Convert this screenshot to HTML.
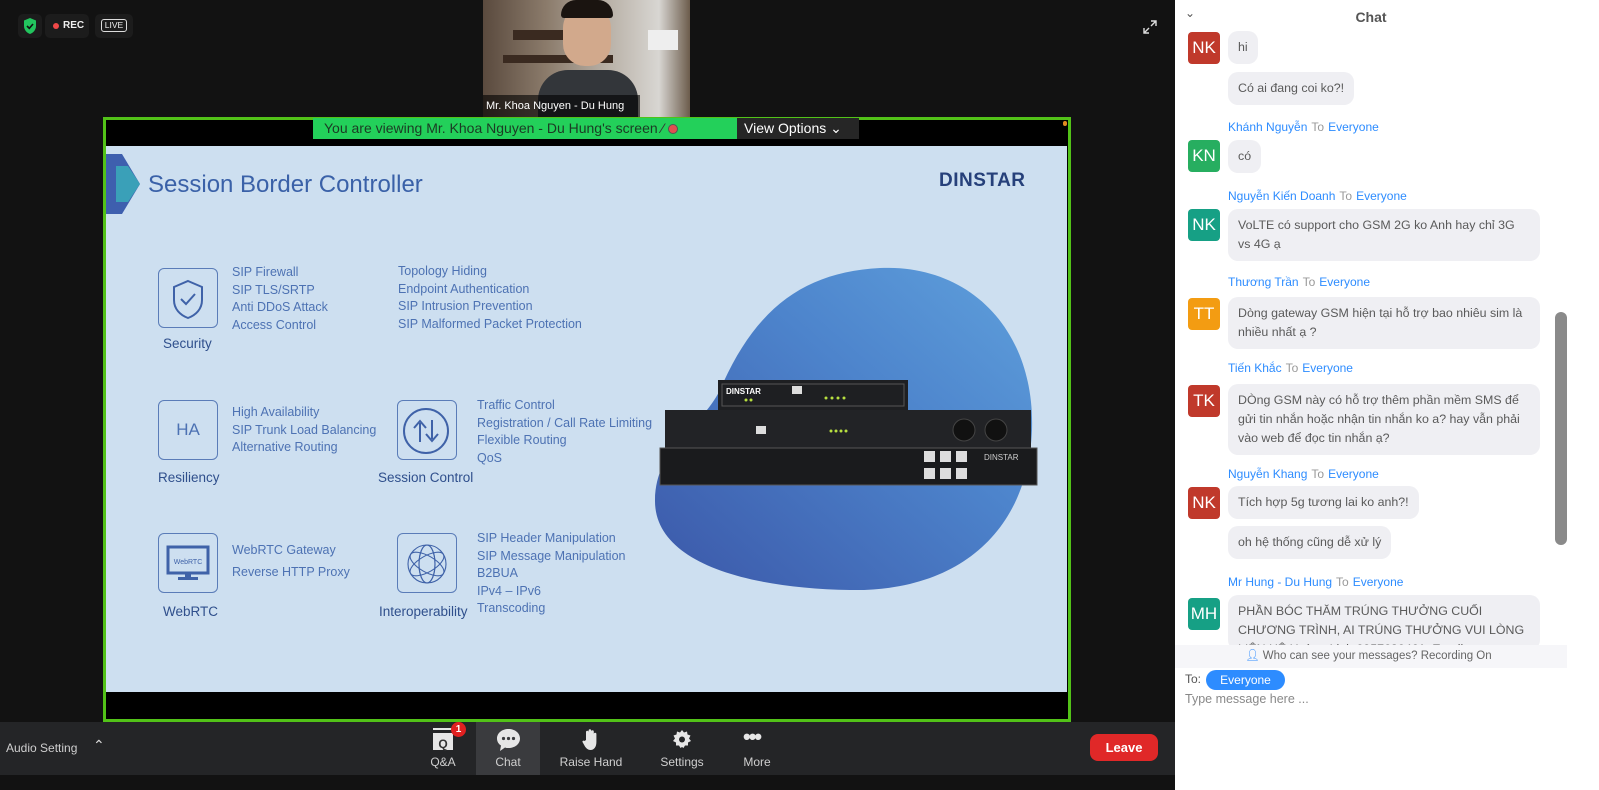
<!DOCTYPE html>
<html><head><meta charset="utf-8"><style>
*{margin:0;padding:0;box-sizing:border-box}
body{width:1599px;height:790px;background:#121212;position:relative;overflow:hidden;font-family:"Liberation Sans","Noto Sans CJK SC",sans-serif}
.a{position:absolute}
.st{position:absolute;color:#4d72b3;font-size:12.5px;line-height:17.6px;white-space:nowrap}
.lb{position:absolute;color:#2f4f8c;font-size:13.5px;white-space:nowrap}
.ib{position:absolute;width:60px;height:60px;border:1.3px solid #5a7cb8;border-radius:6px}
.av{position:absolute;left:1188px;width:32px;height:32px;border-radius:4px;color:#fff;font-size:17px;text-align:center;line-height:32px}
.bu{position:absolute;left:1228px;background:#efeff3;border-radius:10px;color:#5a5a5a;font-size:12.4px;line-height:19px;padding:7px 10px}
.hd{position:absolute;left:1228px;font-size:12px;color:#2d8cff;white-space:nowrap}
.hd span{color:#999;margin:0 4px}
.tb{position:absolute;top:722px;height:53px;color:#cfcfcf;font-size:12px;text-align:center}
</style></head><body>

<div class="a" style="left:18px;top:14px;width:24px;height:24px;background:#1c1c1c;border-radius:5px"></div>
<svg class="a" style="left:22px;top:17px" width="16" height="18" viewBox="0 0 16 18"><path d="M8 1 L14 3.5 V9 C14 13 11 16 8 17 C5 16 2 13 2 9 V3.5Z" fill="#22c55e"/><path d="M5 9 L7.3 11.3 L11 7" stroke="#111" stroke-width="1.6" fill="none"/></svg>
<div class="a" style="left:45px;top:14px;width:44px;height:24px;background:#1c1c1c;border-radius:5px"></div>
<div class="a" style="left:53px;top:23px;width:6px;height:6px;border-radius:3px;background:#f04848"></div>
<div class="a" style="left:63px;top:20px;color:#eee;font-size:10px;font-weight:bold">REC</div>
<div class="a" style="left:95px;top:14px;width:38px;height:24px;background:#1c1c1c;border-radius:5px"></div>
<div class="a" style="left:101px;top:19px;width:26px;height:13px;border:1px solid #ddd;border-radius:3px;color:#eee;font-size:8.5px;text-align:center;line-height:11px">LIVE</div>
<svg class="a" style="left:1143px;top:20px" width="14" height="14" viewBox="0 0 14 14" stroke="#ddd" stroke-width="1.4" fill="none"><path d="M8 1h5v5M13 1L8 6M6 13H1V8M1 13l5-5"/></svg>

<div class="a" style="left:483px;top:0;width:207px;height:117px;background:linear-gradient(90deg,#5a4a3e 0%,#8a7a6a 30%,#b8b0a6 60%,#d8d6d2 85%,#6c5c4c 100%);overflow:hidden">
 <div class="a" style="left:30px;top:30px;width:90px;height:10px;background:#3a2a20"></div>
 <div class="a" style="left:20px;top:55px;width:110px;height:8px;background:#3a2a20"></div>
 <div class="a" style="left:165px;top:30px;width:30px;height:20px;background:#eee"></div>
 <div class="a" style="left:80px;top:4px;width:48px;height:62px;border-radius:24px 24px 22px 22px;background:#d2a98c"></div>
 <div class="a" style="left:78px;top:0px;width:52px;height:18px;border-radius:20px 20px 4px 4px;background:#1a1410"></div>
 <div class="a" style="left:55px;top:70px;width:100px;height:60px;border-radius:30px 30px 0 0;background:#33363a"></div>
 <div class="a" style="left:0;top:95px;width:157px;height:22px;background:rgba(0,0,0,.6);color:#fff;font-size:11px;line-height:22px;padding-left:3px">Mr. Khoa Nguyen - Du Hung</div>
</div>

<div class="a" style="left:103px;top:117px;width:968px;height:605px;border:3px solid #52c218;background:#000"></div>
<div class="a" style="left:1063px;top:121px;width:4px;height:5px;background:#e08a20;border-radius:2px"></div>
<div class="a" style="left:313px;top:118px;width:424px;height:21px;background:#23d05a;color:#1c3a24;font-size:14px;line-height:21px;padding-left:11px;white-space:nowrap">You are viewing Mr. Khoa Nguyen - Du Hung's screen <span style="color:#333">&#x2044;</span> <span style="display:inline-block;width:10px;height:10px;border-radius:5px;border:1px solid #555;background:#e05050;vertical-align:-1px"></span></div>
<div class="a" style="left:737px;top:118px;width:122px;height:21px;background:#262626;color:#fff;font-size:14px;line-height:21px;padding-left:7px">View Options &#x2304;</div>

<div class="a" style="left:106px;top:146px;width:961px;height:546px;background:#cddff0;overflow:hidden">
 <svg class="a" style="left:0;top:0" width="961" height="546">
  <polygon points="0,8 16,8 34,38 16,68 0,68" fill="#3e5fae"/>
  <polygon points="10,20 22,20 34,38 22,56 10,56" fill="#3aa0b8"/>
  <defs><linearGradient id="g" x1="0" y1="1" x2="1" y2="0"><stop offset="0" stop-color="#3b57a8"/><stop offset=".6" stop-color="#4d84cc"/><stop offset="1" stop-color="#5fa0dc"/></linearGradient></defs>
  <path d="M774 122 C864 118 929 184 926 284 C922 384 854 446 744 444 C634 442 548 414 549 354 C550 300 594 284 614 244 C650 160 700 126 774 122Z" fill="url(#g)"/>
  <rect x="612" y="234" width="190" height="30" fill="#1e1f22"/>
  <rect x="616" y="238" width="182" height="22" fill="none" stroke="#555" stroke-width="1"/>
  <text x="620" y="248" fill="#fff" font-size="8" font-weight="bold" font-family="Liberation Sans">DINSTAR</text>
  <rect x="559" y="264" width="366" height="40" fill="#222326"/>
  <circle cx="890" cy="284" r="11" fill="#111" stroke="#444"/><circle cx="858" cy="284" r="11" fill="#111" stroke="#444"/>
  <rect x="650" y="280" width="10" height="8" fill="#ddd"/><rect x="686" y="240" width="10" height="8" fill="#ddd"/>
  <rect x="554" y="302" width="377" height="37" fill="#1a1b1d" stroke="#555"/>
  <rect x="818" y="305" width="11" height="11" fill="#ddd"/><rect x="834" y="305" width="11" height="11" fill="#ddd"/><rect x="850" y="305" width="11" height="11" fill="#ddd"/>
  <rect x="818" y="322" width="11" height="11" fill="#ddd"/><rect x="834" y="322" width="11" height="11" fill="#ddd"/><rect x="850" y="322" width="11" height="11" fill="#ddd"/>
  <text x="878" y="314" fill="#ccc" font-size="8" font-family="Liberation Sans">DINSTAR</text>
  <g fill="#b8e040"><circle cx="725" cy="285" r="1.5"/><circle cx="730" cy="285" r="1.5"/><circle cx="735" cy="285" r="1.5"/><circle cx="740" cy="285" r="1.5"/><circle cx="640" cy="254" r="1.5"/><circle cx="645" cy="254" r="1.5"/><circle cx="720" cy="252" r="1.5"/><circle cx="726" cy="252" r="1.5"/><circle cx="732" cy="252" r="1.5"/><circle cx="738" cy="252" r="1.5"/></g>
 </svg>
 <div class="a" style="left:42px;top:25px;color:#3a61a8;font-size:24px">Session Border Controller</div>
 <div class="a" style="left:833px;top:24px;color:#26407a;font-size:19px;font-weight:bold;letter-spacing:.5px">DINSTAR</div>
</div>

<div class="ib" style="left:158px;top:268px"></div>
<svg class="a" style="left:170px;top:278px" width="36" height="42" viewBox="0 0 36 42" fill="none" stroke="#3f62a8" stroke-width="2"><path d="M18 3 L32 9 V22 C32 31 26 37 18 40 C10 37 4 31 4 22 V9Z"/><path d="M11 21 L16 26 L25 16"/></svg>
<div class="st" style="left:232px;top:264px">SIP Firewall<br>SIP TLS/SRTP<br>Anti DDoS Attack<br>Access Control</div>
<div class="st" style="left:398px;top:263px">Topology Hiding<br>Endpoint Authentication<br>SIP Intrusion Prevention<br>SIP Malformed Packet Protection</div>
<div class="lb" style="left:163px;top:336px">Security</div>

<div class="ib" style="left:158px;top:400px"></div>
<div class="a" style="left:158px;top:420px;width:60px;text-align:center;color:#4d72b3;font-size:17px">HA</div>
<div class="st" style="left:232px;top:404px">High Availability<br>SIP Trunk Load Balancing<br>Alternative Routing</div>
<div class="lb" style="left:158px;top:470px">Resiliency</div>

<div class="ib" style="left:397px;top:400px"></div>
<svg class="a" style="left:401px;top:406px" width="50" height="50" viewBox="0 0 50 50" fill="none" stroke="#3f62a8" stroke-width="2"><circle cx="25" cy="25" r="22"/><path d="M19 36 V17 M13 22 L19 15 L25 22 M31 14 V33 M25 28 L31 35 L37 28"/></svg>
<div class="st" style="left:477px;top:397px">Traffic Control<br>Registration / Call Rate Limiting<br>Flexible Routing<br>QoS</div>
<div class="lb" style="left:378px;top:470px">Session Control</div>

<div class="ib" style="left:158px;top:533px"></div>
<svg class="a" style="left:166px;top:545px" width="44" height="38" viewBox="0 0 44 38"><rect x="2" y="2" width="40" height="26" fill="none" stroke="#3f62a8" stroke-width="3"/><rect x="19" y="28" width="6" height="4" fill="#3f62a8"/><rect x="12" y="32" width="20" height="3" fill="#3f62a8"/><text x="22" y="19" text-anchor="middle" fill="#3f62a8" font-size="7" font-family="Liberation Sans">WebRTC</text></svg>
<div class="st" style="left:232px;top:542px">WebRTC Gateway</div>
<div class="st" style="left:232px;top:564px">Reverse HTTP Proxy</div>
<div class="lb" style="left:163px;top:604px">WebRTC</div>

<div class="ib" style="left:397px;top:533px"></div>
<svg class="a" style="left:405px;top:542px" width="44" height="44" viewBox="0 0 44 44" fill="none" stroke="#3f62a8" stroke-width="1.1"><circle cx="22" cy="22" r="19"/><ellipse cx="22" cy="22" rx="19" ry="8" transform="rotate(30 22 22)"/><ellipse cx="22" cy="22" rx="19" ry="8" transform="rotate(-30 22 22)"/><ellipse cx="22" cy="22" rx="19" ry="8" transform="rotate(90 22 22)"/><ellipse cx="22" cy="22" rx="8" ry="19"/></svg>
<div class="st" style="left:477px;top:530px">SIP Header Manipulation<br>SIP Message Manipulation<br>B2BUA<br>IPv4 – IPv6<br>Transcoding</div>
<div class="lb" style="left:379px;top:604px">Interoperability</div>

<div class="a" style="left:0;top:722px;width:1175px;height:53px;background:#242527"></div>
<div class="a" style="left:0;top:775px;width:1175px;height:15px;background:#121212"></div>
<div class="a" style="left:6px;top:741px;color:#cfcfcf;font-size:12px">Audio Setting</div>
<div class="a" style="left:93px;top:737px;color:#ddd;font-size:14px">&#x2303;</div>
<div class="a" style="left:476px;top:722px;width:64px;height:53px;background:#3a3b3e"></div>
<div class="tb" style="left:420px;width:46px"><div style="margin:8px auto 0;width:20px;height:20px;background:#e6e6e6;color:#333;font-size:12px;line-height:22px;font-weight:bold;border-top:3px solid #242527;box-shadow:0 -2px 0 #e6e6e6">Q</div><div style="margin-top:5px">Q&amp;A</div></div>
<div class="a" style="left:451px;top:722px;width:15px;height:15px;border-radius:8px;background:#e02020;color:#fff;font-size:10px;font-weight:bold;text-align:center;line-height:15px">1</div>
<svg class="a" style="left:496px;top:728px" width="25" height="24" viewBox="0 0 25 24"><path d="M12.5 1 C19 1 24 5 24 10.5 C24 16 19 20 12.5 20 C11 20 10 20 9 19.5 L4 23 L5 17.5 C2.5 16 1 13.5 1 10.5 C1 5 6 1 12.5 1Z" fill="#e6e6e6"/><circle cx="7.5" cy="10.5" r="1.6" fill="#3a3b3e"/><circle cx="12.5" cy="10.5" r="1.6" fill="#3a3b3e"/><circle cx="17.5" cy="10.5" r="1.6" fill="#3a3b3e"/></svg>
<div class="tb" style="left:476px;width:64px;top:755px;height:auto">Chat</div>
<svg class="a" style="left:581px;top:728px" width="20" height="23" viewBox="0 0 20 23"><path d="M5 12 V4 a1.3 1.3 0 0 1 2.6 0 V10 V2.5 a1.3 1.3 0 0 1 2.6 0 V10 V3.5 a1.3 1.3 0 0 1 2.6 0 V11 V6 a1.3 1.3 0 0 1 2.6 0 V14 C15.4 19 13 22 9.5 22 C7 22 5.5 20.5 4 18.5 L1.5 14 C1 13 2.5 12 3.5 13 Z" fill="#e6e6e6"/></svg>
<div class="tb" style="left:555px;width:72px;top:755px;height:auto">Raise Hand</div>
<svg class="a" style="left:672px;top:729px" width="20" height="20" viewBox="0 0 20 20"><path d="M10 1 L12 3.5 L15 2.5 L15.5 5.5 L18.5 6.5 L17 9.5 L19 12 L16 13.5 L16 16.5 L13 16.5 L11.5 19 L10 18 L8.5 19 L7 16.5 L4 16.5 L4 13.5 L1 12 L3 9.5 L1.5 6.5 L4.5 5.5 L5 2.5 L8 3.5Z" fill="#e6e6e6"/><circle cx="10" cy="10.5" r="3" fill="#242527"/></svg>
<div class="tb" style="left:652px;width:60px;top:755px;height:auto">Settings</div>
<div class="a" style="left:743px;top:730px;color:#e6e6e6;font-size:22px;letter-spacing:-2px;font-weight:bold;line-height:14px">&#8226;&#8226;&#8226;</div>
<div class="tb" style="left:732px;width:50px;top:755px;height:auto">More</div>
<div class="a" style="left:1090px;top:734px;width:68px;height:27px;border-radius:8px;background:#e02828;color:#fff;font-weight:bold;font-size:13px;text-align:center;line-height:27px">Leave</div>

<div class="a" style="left:1175px;top:0;width:424px;height:790px;background:#fff"></div>
<div class="a" style="left:1185px;top:6px;color:#555;font-size:12px">&#x2304;</div>
<div class="a" style="left:1175px;top:9px;width:392px;text-align:center;color:#555;font-size:14px;font-weight:bold">Chat</div>
<div class="a" style="left:1555px;top:312px;width:12px;height:233px;border-radius:6px;background:#8a8a8a"></div>

<div class="av" style="top:32px;background:#c0392b">NK</div>
<div class="bu" style="top:31px">hi</div>
<div class="bu" style="top:72px">Có ai đang coi ko?!</div>
<div class="hd" style="top:120px">Khánh Nguyễn<span>To</span>Everyone</div>
<div class="av" style="top:140px;background:#27ae60">KN</div>
<div class="bu" style="top:140px">có</div>
<div class="hd" style="top:189px">Nguyễn Kiến Doanh<span>To</span>Everyone</div>
<div class="av" style="top:209px;background:#16a085">NK</div>
<div class="bu" style="top:209px;width:312px">VoLTE có support cho GSM 2G ko Anh hay chỉ 3G vs 4G ạ</div>
<div class="hd" style="top:275px">Thương Trần<span>To</span>Everyone</div>
<div class="av" style="top:298px;background:#f39c12">TT</div>
<div class="bu" style="top:297px;width:312px">Dòng gateway GSM hiện tại hỗ trợ bao nhiêu sim là nhiều nhất ạ ?</div>
<div class="hd" style="top:361px">Tiến Khắc<span>To</span>Everyone</div>
<div class="av" style="top:385px;background:#c0392b">TK</div>
<div class="bu" style="top:384px;width:312px">DÒng GSM này có hỗ trợ thêm phần mềm SMS để gửi tin nhắn hoặc nhận tin nhắn ko a? hay vẫn phải vào web để đọc tin nhắn ạ?</div>
<div class="hd" style="top:467px">Nguyễn Khang<span>To</span>Everyone</div>
<div class="av" style="top:487px;background:#c0392b">NK</div>
<div class="bu" style="top:486px">Tích hợp 5g tương lai ko anh?!</div>
<div class="bu" style="top:526px">oh hệ thống cũng dễ xử lý</div>
<div class="hd" style="top:575px">Mr Hung - Du Hung<span>To</span>Everyone</div>
<div class="av" style="top:598px;background:#16a085">MH</div>
<div class="bu" style="top:595px;width:312px;height:55px;overflow:hidden">PHẦN BÓC THĂM TRÚNG THƯỞNG CUỐI CHƯƠNG TRÌNH, AI TRÚNG THƯỞNG VUI LÒNG LIÊN HỆ Hoàng Linh 0957630461. Email</div>

<div class="a" style="left:1175px;top:645px;width:392px;height:23px;background:#f6f6f9;color:#666;font-size:11.5px;line-height:23px;padding-left:70px"><span style="color:#2d8cff">&#x1F464;&#xFE0E;</span> Who can see your messages? Recording On</div>
<div class="a" style="left:1185px;top:672px;color:#555;font-size:12px">To:</div>
<div class="a" style="left:1206px;top:670px;width:79px;height:20px;border-radius:10px;background:#2d8cff;color:#fff;font-size:12px;text-align:center;line-height:20px">Everyone</div>
<div class="a" style="left:1185px;top:692px;color:#888;font-size:12.5px">Type message here ...</div>
</body></html>
